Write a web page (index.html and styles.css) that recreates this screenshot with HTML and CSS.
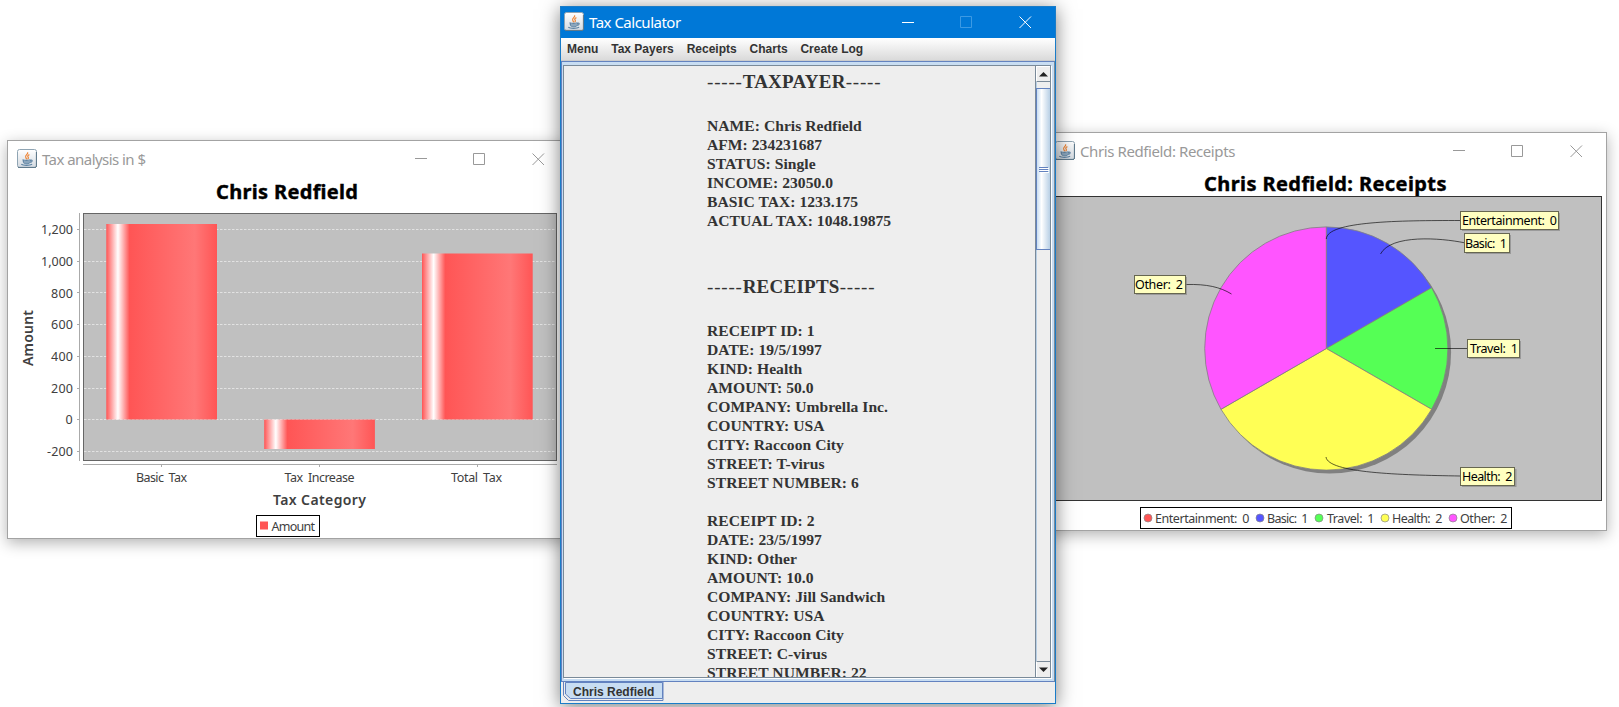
FILE: index.html
```html
<!DOCTYPE html>
<html lang="en">
<head>
<meta charset="utf-8">
<title>Tax Calculator</title>
<link rel="stylesheet" href="styles.css">
</head>
<body>
<svg class="defs" width="0" height="0" aria-hidden="true">
  <defs>
    <linearGradient id="iconbg" x1="0" y1="0" x2="0" y2="1"><stop offset="0" stop-color="#fff"/><stop offset="1" stop-color="#d3dae1"/></linearGradient>
    <linearGradient id="bar"><stop offset="0" stop-color="#f55"/><stop offset=".105" stop-color="#fff"/><stop offset=".21" stop-color="#f55"/><stop offset=".8" stop-color="#f77"/><stop offset="1" stop-color="#f55"/></linearGradient>
    <symbol id="java" viewBox="0 0 20 20">
      <rect x=".5" y=".5" width="19" height="18" rx="2" fill="url(#iconbg)" stroke="#8fa4b3"/>
      <path d="M1 18.4h18M19.4 3v15" stroke="#5b7688" fill="none"/>
      <path d="M10.6 3.2c1.2 2-3.6 3-1.8 5.4.4.7.9 1 .7 1.7M12.4 5.6c-2.4 1-1.700 2-1.100 2.800.5.8 0 1.300-.7 1.900" fill="none" stroke="#ee8434" stroke-width="1.200"/>
      <path d="M5.500 10.700c2 .7 6 .7 8 0M6.200 11.200c0 3 1.400 3.400 3.600 3.400s3.400-.6 3.500-3.100M13.500 11.300c2.500-.6 2 1.900-.8 2.100M4.300 15.300c2 1.400 8.500 1.300 10.800-.1" fill="none" stroke="#5f84a4" stroke-width="1.200"/>
      <path d="M6.800 12h6v1.500l-2 1H8z" fill="#8ba6bd"/>
    </symbol>
  </defs>
</svg>

<section class="window window-bars">
  <header class="titlebar">
    <svg class="app-icon" width="20" height="20"><use href="#java"/></svg>
    <span class="title title-bars">Tax analysis in $</span>
    <svg class="controls" width="130" height="14" viewBox="0 0 130 14"><path d="M0 6.500h12M58.500 1.500h11v11h-11zM117.500 1.500l11.500 11.500M129 1.500l-11.500 11.500"/></svg>
  </header>
  <svg class="chart" width="560" height="366" viewBox="8 172 560 366">
    <text class="heading" x="216" y="199" textLength="142">Chris Redfield</text>
    <rect x="83.500" y="213.500" width="473" height="247" fill="#c0c0c0" stroke="#666"/>
    <path class="grid" d="M84 229.500h472M84 261.500h472M84 292.500h472M84 324.500h472M84 356.500h472M84 388.500h472M84 419.500h472M84 451.500h472"/>
    <path class="axis" d="M79.500 213v248M77 229.500h2M77 261.500h2M77 292.500h2M77 324.500h2M77 356.500h2M77 388.500h2M77 419.500h2M77 451.500h2M83 464.500h474M161.500 465v2M319.500 465v2M477.500 465v2"/>
    <rect x="106.300" y="224" width="110.700" height="195.500" fill="url(#bar)"/>
    <rect x="264.200" y="419.500" width="110.700" height="29.500" fill="url(#bar)"/>
    <rect x="422" y="253.500" width="110.700" height="166" fill="url(#bar)"/>
    <g class="label">
      <text x="41" y="234" textLength="32">1,200</text>
      <text x="41" y="266" textLength="32">1,000</text>
      <text x="51" y="298" textLength="22">800</text>
      <text x="51" y="329" textLength="22">600</text>
      <text x="51" y="361" textLength="22">400</text>
      <text x="51" y="393" textLength="22">200</text>
      <text x="65.500" y="424" textLength="7">0</text>
      <text x="47" y="456" textLength="26">-200</text>
      <text x="136" y="482" textLength="51">Basic Tax</text>
      <text x="284.500" y="482" textLength="70">Tax Increase</text>
      <text x="451" y="482" textLength="51">Total Tax</text>
    </g>
    <text class="axis-title" x="273" y="505" textLength="93">Tax Category</text>
    <text class="axis-title" transform="translate(33 366) rotate(-90)" textLength="56">Amount</text>
    <rect x="256.500" y="515.500" width="63" height="21" fill="#fff" stroke="#000"/>
    <rect x="260" y="521.500" width="8" height="8" fill="#f55"/>
    <text class="label" x="271.500" y="531" textLength="43.500">Amount</text>
  </svg>
</section>

<section class="window window-pie">
  <header class="titlebar">
    <svg class="app-icon" width="20" height="20"><use href="#java"/></svg>
    <span class="title title-pie">Chris Redfield: Receipts</span>
    <svg class="controls" width="130" height="14" viewBox="0 0 130 14"><path d="M0 6.500h12M58.500 1.500h11v11h-11zM117.500 1.500l11.500 11.500M129 1.500l-11.500 11.500"/></svg>
  </header>
  <svg class="chart" width="560" height="366" viewBox="1046 164 560 366">
    <text class="heading" x="1204" y="191" textLength="242.500">Chris Redfield: Receipts</text>
    <rect x="1049.500" y="196.500" width="552" height="304" fill="#c0c0c0" stroke="#333"/>
    <circle cx="1329.500" cy="352" r="121.600" fill="#808080"/>
    <g stroke="#808080" stroke-width=".8">
      <path fill="#55f" d="M1326.300 348.500V226.900A121.600 121.600 0 0 1 1431.610 287.700Z"/>
      <path fill="#5f5" d="M1326.300 348.500L1431.610 287.700A121.600 121.600 0 0 1 1431.610 409.300Z"/>
      <path fill="#ff5" d="M1326.300 348.500L1431.610 409.300A121.600 121.600 0 0 1 1220.990 409.300Z"/>
      <path fill="#f5f" d="M1326.300 348.500L1220.990 409.300A121.600 121.600 0 0 1 1326.300 226.900Z"/>
    </g>
    <path class="leader" d="M1326.300 239C1327 221 1400 220.500 1460 220.500M1380.500 254C1391 234 1441 238 1464 242.700M1435 348.500H1467M1326 457C1328 473 1400 475 1460 476M1186 284.500C1207 284 1220 287 1231.500 294"/>
    <g fill="#808080" opacity=".6">
      <rect x="1462" y="213" width="98" height="18"/><rect x="1466" y="235" width="45" height="19"/><rect x="1469" y="341" width="52" height="18"/><rect x="1462" y="469" width="54.500" height="18"/><rect x="1136" y="277" width="51" height="18"/>
    </g>
    <g fill="#ffffc0" stroke="#666650">
      <rect x="1460.500" y="211.500" width="98" height="18"/><rect x="1464.500" y="233.500" width="45" height="19"/><rect x="1467.500" y="339.500" width="52" height="18"/><rect x="1460.500" y="467.500" width="54" height="18"/><rect x="1134.500" y="275.500" width="51" height="18"/>
    </g>
    <g class="label label-dark">
      <text x="1462" y="225" textLength="95">Entertainment: 0</text>
      <text x="1465" y="248" textLength="42">Basic: 1</text>
      <text x="1470" y="353" textLength="48">Travel: 1</text>
      <text x="1462" y="481" textLength="50.500">Health: 2</text>
      <text x="1135" y="289" textLength="48">Other: 2</text>
    </g>
    <rect x="1140.500" y="507.500" width="371" height="21" fill="#fff" stroke="#000"/>
    <g stroke="#888" stroke-width=".7">
      <circle cx="1148" cy="518" r="4" fill="#f55"/><circle cx="1260" cy="518" r="4" fill="#55f"/><circle cx="1319" cy="518" r="4" fill="#5f5"/><circle cx="1385" cy="518" r="4" fill="#ff5"/><circle cx="1453" cy="518" r="4" fill="#f5f"/>
    </g>
    <g class="label">
      <text x="1155" y="523" textLength="94.500">Entertainment: 0</text>
      <text x="1267" y="523" textLength="41.500">Basic: 1</text>
      <text x="1327" y="523" textLength="47.500">Travel: 1</text>
      <text x="1392" y="523" textLength="50.500">Health: 2</text>
      <text x="1460" y="523" textLength="47.500">Other: 2</text>
    </g>
  </svg>
</section>

<section class="window-main">
  <header class="titlebar titlebar-main">
    <svg class="app-icon" width="20" height="20"><use href="#java"/></svg>
    <span class="title title-main">Tax Calculator</span>
    <svg class="controls controls-main" width="130" height="14" viewBox="0 0 130 14"><path d="M0 6.500h12M117.500.5l11.500 11.500M129 .5l-11.500 11.500"/><path class="disabled" d="M58.500.5h11v11h-11z"/></svg>
  </header>
  <nav class="menubar"><span>Menu</span><span>Tax Payers</span><span>Receipts</span><span>Charts</span><span>Create Log</span></nav>
  <div class="pane">
    <div class="scrollpane">
      <div class="report">
        <h2><span>-----</span>TAXPAYER<span>-----</span></h2>
        <p>NAME: Chris Redfield<br>AFM: 234231687<br>STATUS: Single<br>INCOME: 23050.0<br>BASIC TAX: 1233.175<br>ACTUAL TAX: 1048.19875</p>
        <h2 class="second"><span>-----</span>RECEIPTS<span>-----</span></h2>
        <p>RECEIPT ID: 1<br>DATE: 19/5/1997<br>KIND: Health<br>AMOUNT: 50.0<br>COMPANY: Umbrella Inc.<br>COUNTRY: USA<br>CITY: Raccoon City<br>STREET: T-virus<br>STREET NUMBER: 6</p>
        <p class="entry">RECEIPT ID: 2<br>DATE: 23/5/1997<br>KIND: Other<br>AMOUNT: 10.0<br>COMPANY: Jill Sandwich<br>COUNTRY: USA<br>CITY: Raccoon City<br>STREET: C-virus<br>STREET NUMBER: 22</p>
      </div>
      <div class="scrollbar">
        <div class="scroll-btn up"><svg width="9" height="5"><path d="M0 4.500L4.500 0 9 4.500z"/></svg></div>
        <div class="track"><div class="thumb"><i></i><i></i><i></i></div></div>
        <div class="scroll-btn down"><svg width="9" height="5"><path d="M0 .5L4.500 5 9 .5z"/></svg></div>
      </div>
    </div>
  </div>
  <footer class="tabs">
    <svg class="tab-shape" width="101" height="20" viewBox="0 0 101 20"><path d="M2.500 1.500h97v16H7.500l-5-4.500z" fill="#c8ddf2" stroke="#6382bf"/><path d="M.5 0v14.500l5 5h94.500V0" fill="none" stroke="#6382bf"/></svg>
    <span class="tab-label">Chris Redfield</span>
  </footer>
</section>
</body>
</html>
```

FILE: styles.css
```css
* { box-sizing: border-box; }
body { margin: 0; width: 1619px; height: 707px; overflow: hidden; position: relative; background: #fff; font-family: "Noto Sans", sans-serif; }
.defs { position: absolute; }
svg { display: block; }

/* desktop windows */
.window { position: absolute; width: 562px; height: 399px; border: 1px solid #a3a3a3; background: #fff; box-shadow: 0 4px 14px rgba(0,0,0,.3); }
.window-bars { left: 7px; top: 140px; }
.window-pie { left: 1045px; top: 132px; }
.window-main { position: absolute; left: 560px; top: 6px; width: 496px; height: 698px; border: 1px solid #1a7cc8; background: #eee; box-shadow: 0 3px 18px rgba(0,0,0,.5); display: flex; flex-direction: column; }

.titlebar { display: flex; align-items: center; height: 31px; padding: 5px 23px 0 9px; color: #999; font-size: 15px; }
.title { margin-left: 5px; flex: 1; line-height: 20px; white-space: nowrap; }
.title-bars { letter-spacing: -.55px; }
.title-pie { letter-spacing: -.4px; }
.controls { fill: none; stroke: #999; stroke-width: 1; }
.titlebar-main { height: 31px; padding: 0 23px 2px 3px; background: #0078d7; color: #fff; flex: none; }
.title-main { letter-spacing: -.5px; }
.controls-main { stroke: #fff; position: relative; top: 1px; }
.disabled { stroke: #3c9ae4; }

/* charts */
.heading { font: bold 20px "Noto Sans", sans-serif; stroke: #000; stroke-width: .4px; }
.label { font: 12.500px "Noto Sans", sans-serif; fill: #404040; word-spacing: 2.5px; }
.label-dark { fill: #000; }
.axis-title { font: 600 14px "Noto Sans", sans-serif; fill: #404040; }
.axis { fill: none; stroke: #aaa; }
.grid { fill: none; stroke: #e2e2e2; stroke-dasharray: 2.500 1.500; }
.leader { fill: none; stroke: #000; stroke-opacity: .7; stroke-width: .9; }

/* menu bar */
.menubar { display: flex; gap: 12.900px; height: 23px; padding: 0 6px; flex: none; font: bold 12px/22px "Liberation Sans", sans-serif; color: #333; background: linear-gradient(#fff, #dadada); border-bottom: 1px solid #ccc; white-space: nowrap; }

/* tabbed pane */
.pane { height: 621px; flex: none; border: 1px solid #6382bf; border-right-color: #7a8a99; background: #c8ddf2; padding: 3px 3px 3px 1px; }
.scrollpane { display: flex; height: 613px; border: 1px solid #7a8a99; box-shadow: 1px 1px 0 #fff; background: #eee; overflow: hidden; }
.report { flex: 1; padding: 4px 0 0 143px; font-family: "Liberation Serif", serif; font-weight: bold; color: #333; white-space: nowrap; overflow: hidden; }
.report h2 { margin: 0 0 22px; font-size: 19px; line-height: 24px; letter-spacing: .25px; }
.report h2 span { font-weight: normal; letter-spacing: .8px; }
.report h2.second { margin-top: 45px; }
.report p { margin: 0; font-size: 15.600px; line-height: 19px; letter-spacing: .03px; }
.report .entry { margin-top: 19px; }

.scrollbar { width: 15px; border-left: 1px solid #7a8a99; display: flex; flex-direction: column; background: #eee; box-shadow: inset 1px 0 #b8cfe5; }
.scroll-btn { height: 16px; flex: none; display: flex; align-items: center; justify-content: center; fill: #222; background: #eee; border-left: 1px solid #fff; }
.up { border-top: 1px solid #fff; border-bottom: 1px solid #7a8a99; }
.down { border-top: 1px solid #7a8a99; }
.track { flex: 1; padding-top: 6px; }
.thumb { height: 162px; border: 1px solid #6382bf; border-width: 1px 0 1px 1px; background: linear-gradient(90deg, #c8ddf2, #fff 35%, #b8cfe5); display: flex; flex-direction: column; align-items: center; justify-content: center; gap: 1px; }
.thumb i { width: 9px; height: 1px; background: #6382bf; box-shadow: 1px 1px #fff; }

.tabs { position: relative; flex: 1; margin-top: -1px; padding-left: 2px; }
.tab-label { position: absolute; left: 12px; top: 3px; font: bold 12px/17px "Liberation Sans", sans-serif; color: #333; white-space: nowrap; }
```
